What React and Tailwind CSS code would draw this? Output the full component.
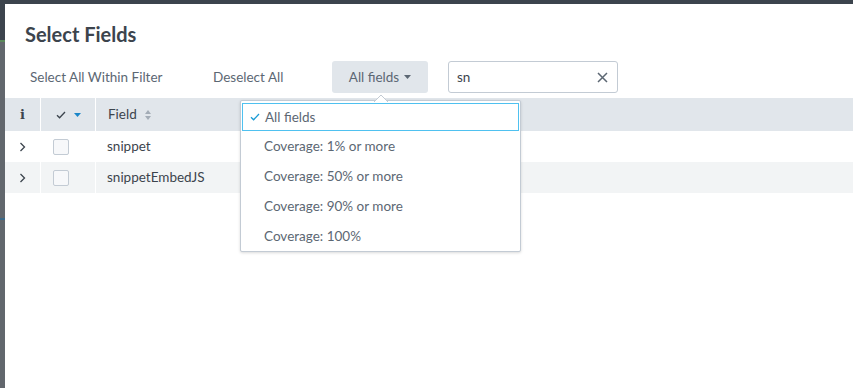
import React from "react";

const font = { fontFamily: "Lato, 'Open Sans', sans-serif" };

function Check({ className }) {
  return (
    <svg className={className} width="10" height="8" viewBox="0 0 10 8" fill="none">
      <path d="M1 4.2 L3.6 6.8 L9 1" stroke="currentColor" strokeWidth="1.3" />
    </svg>
  );
}

function Chevron() {
  return (
    <svg width="7" height="10" viewBox="0 0 7 10" fill="none">
      <path d="M1.5 1 L5.5 5 L1.5 9" stroke="#3c444d" strokeWidth="1.3" />
    </svg>
  );
}

export default function App() {
  const items = ["All fields", "Coverage: 1% or more", "Coverage: 50% or more", "Coverage: 90% or more", "Coverage: 100%"];
  return (
    <div className="w-[853px] h-[388px] overflow-hidden flex flex-col bg-[#62676d] text-[#3c444d]" style={font}>
      <div className="h-[4px] bg-[#3c444d] shrink-0" />
      <div className="flex flex-1">
        <div className="w-[5px] flex flex-col bg-[#62676d]">
          <div className="h-[36px] bg-[#3c444d]" />
          <div className="h-[2px] bg-[#5a8a5a]" />
          <div className="h-[176px]" />
          <div className="h-[2px] bg-[#3a6a8a]" />
        </div>
        <div className="flex-1 bg-white relative">
          <div className="pl-[20px] pt-[17px] h-[53px] text-[20px] font-bold leading-[26px] text-[#3c444d]">Select Fields</div>
          <div className="flex items-center h-[32px] mt-[4px] text-[13.5px] text-[#5c6773]">
            <div className="ml-[25px] w-[183px]">Select All Within Filter</div>
            <div className="w-[119px]">Deselect All</div>
            <div className="w-[96px] h-[32px] rounded-[3px] bg-[#e1e6eb] flex items-center justify-center gap-[5px]">
              <span>All fields</span>
              <svg width="7" height="4" viewBox="0 0 7 4"><path d="M0 0 H7 L3.5 4 Z" fill="#5c6773" /></svg>
            </div>
            <div className="ml-[20px] w-[170px] h-[32px] rounded-[3px] border border-[#c3cbd4] flex items-center justify-between pl-[8px] pr-[9px] text-[#3c444d]">
              <span>sn</span>
              <svg width="11" height="11" viewBox="0 0 11 11"><path d="M1 1 L10 10 M10 1 L1 10" stroke="#5c6773" strokeWidth="1.5" /></svg>
            </div>
          </div>
          <div className="mt-[5px] text-[13.5px]">
            <div className="flex h-[33px] bg-[#e1e6eb] items-center">
              <div className="w-[35px] flex justify-center font-bold text-[13px]" style={{ fontFamily: "'DejaVu Serif', serif" }}>i</div>
              <div className="w-[1px] self-stretch bg-white" />
              <div className="w-[54px] flex items-center justify-center gap-[8px]">
                <Check className="text-[#3c444d]" />
                <svg width="7" height="4" viewBox="0 0 7 4"><path d="M0 0 H7 L3.5 4 Z" fill="#1a86c8" /></svg>
              </div>
              <div className="w-[1px] self-stretch bg-white" />
              <div className="pl-[12px] flex items-center gap-[8px]">
                <span>Field</span>
                <svg width="6" height="10" viewBox="0 0 6 10"><path d="M0 4 L3 0 L6 4 Z M0 6 L3 10 L6 6 Z" fill="#a3acb6" /></svg>
              </div>
            </div>
            {["snippet", "snippetEmbedJS"].map((n, i) => (
              <div key={n} className={`flex h-[31px] items-center ${i === 1 ? "bg-[#f2f4f5]" : "bg-white"}`}>
                <div className="w-[35px] flex justify-center"><Chevron /></div>
                <div className="w-[1px] self-stretch bg-white" />
                <div className="w-[54px] flex items-center pl-[12px]">
                  <div className="w-[16px] h-[16px] rounded-[2px] border border-[#c3cbd4] bg-[#f7f8fa]" />
                </div>
                <div className="w-[1px] self-stretch bg-white" />
                <div className="pl-[11px]">{n}</div>
              </div>
            ))}
          </div>

          <div className="absolute left-[235px] top-[96px] w-[281px] bg-white border border-[#c3cbd4] rounded-[2px] shadow-[0_1px_3px_rgba(0,0,0,0.15)] pt-[2px] text-[13.5px] text-[#5c6773]">
            <svg className="absolute left-[133px] top-[-6px]" width="14" height="7" viewBox="0 0 14 7">
              <path d="M0 7 L7 0 L14 7" fill="white" stroke="#c3cbd4" strokeWidth="1" />
            </svg>
            {items.map((t, i) => (
              <div key={t} className={`flex items-center ${i === 0 ? "border border-[#4fc1f0] mx-[1px] h-[28px]" : "h-[30px]"}`}>
                <div className={`${i === 0 ? "w-[22px]" : "w-[23px]"} flex justify-end pr-[5px]`}>{i === 0 && <Check className="text-[#1a9cd6]" />}</div>
                <span>{t}</span>
              </div>
            ))}
          </div>
        </div>
      </div>
    </div>
  );
}
